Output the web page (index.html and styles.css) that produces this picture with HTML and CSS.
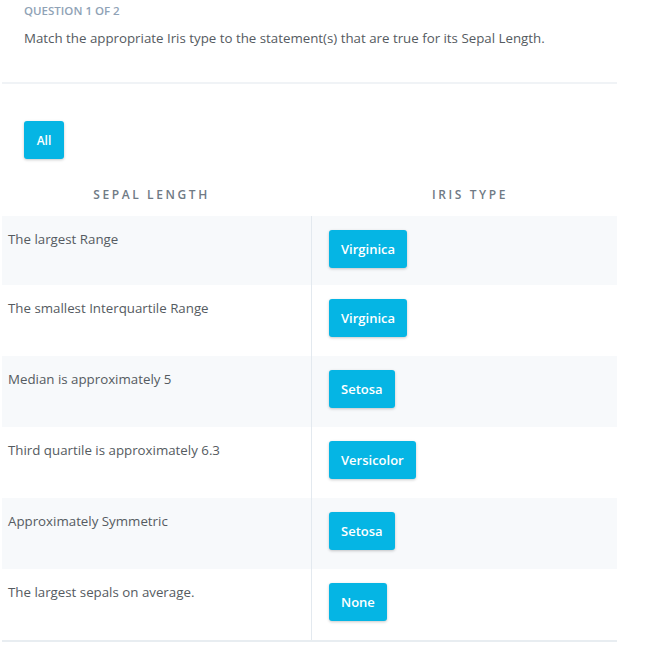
FILE: index.html
```html
<!DOCTYPE html>
<html>
<head>
<meta charset="utf-8">
<link rel="stylesheet" href="styles.css">
</head>
<body>
<div class="page">
  <div class="question">
    <div class="q-label">QUESTION 1 OF 2</div>
    <div class="q-text">Match the appropriate Iris type to the statement(s) that are true for its Sepal Length.</div>
  </div>
  <div class="filter">
    <button class="btn btn-all">All</button>
  </div>
  <div class="table">
    <div class="thead">
      <div class="th th-left">SEPAL LENGTH</div>
      <div class="th th-right">IRIS TYPE</div>
    </div>
    <div class="row shade first">
      <div class="cell-text">The largest Range</div>
      <div class="cell-btn"><button class="btn">Virginica</button></div>
    </div>
    <div class="row">
      <div class="cell-text">The smallest Interquartile Range</div>
      <div class="cell-btn"><button class="btn">Virginica</button></div>
    </div>
    <div class="row shade">
      <div class="cell-text">Median is approximately 5</div>
      <div class="cell-btn"><button class="btn">Setosa</button></div>
    </div>
    <div class="row">
      <div class="cell-text">Third quartile is approximately 6.3</div>
      <div class="cell-btn"><button class="btn">Versicolor</button></div>
    </div>
    <div class="row shade">
      <div class="cell-text">Approximately Symmetric</div>
      <div class="cell-btn"><button class="btn">Setosa</button></div>
    </div>
    <div class="row last">
      <div class="cell-text">The largest sepals on average.</div>
      <div class="cell-btn"><button class="btn">None</button></div>
    </div>
  </div>
</div>
</body>
</html>
```

FILE: styles.css
```css
* { box-sizing: border-box; }
html, body { margin: 0; padding: 0; background: #fff; }
body { font-family: "Open Sans", "Liberation Sans", sans-serif; color: #555b61; }
.page { width: 615px; margin-left: 2px; }
.question { padding: 3px 22px 0; border-bottom: 2px solid #f0f3f6; height: 84px; }
.q-label { font-size: 11.5px; font-weight: 600; color: #8fa2b6; line-height: 16px; }
.q-text { font-size: 13.3px; color: #555b61; line-height: 18px; margin-top: 10px; }
.filter { padding: 37px 0 0 22px; }
.btn {
  font-family: "Open Sans", "Liberation Sans", sans-serif;
  font-size: 13px; font-weight: 600; color: #fff;
  background: #05b5e4; border: none; border-radius: 3px;
  height: 38px; padding: 0 12px;
  box-shadow: 0 1px 3px rgba(0,0,0,0.22);
}
.btn-all { width: 40px; padding: 0; font-size: 12px; }
.thead { display: grid; grid-template-columns: 309px 306px; height: 57px; }
.th { text-align: center; font-size: 12px; font-weight: 600; letter-spacing: 2.6px; color: #6f7a85; padding-top: 28px; line-height: 16px; }
.th-left { padding-right: 10px; }
.th-right { padding-left: 12px; }
.row { display: grid; grid-template-columns: 309px 306px; height: 71px; }
.row.first { height: 69px; }
.row.shade { background: #f7f9fb; }
.row.last { border-bottom: 2px solid #e8edf1; height: 73px; }
.cell-text { font-size: 13.3px; line-height: 18px; padding: 14px 6px 0; color: #555b61; }
.cell-btn { border-left: 1px solid #e3e9ef; padding: 14px 0 0 17px; }
```
